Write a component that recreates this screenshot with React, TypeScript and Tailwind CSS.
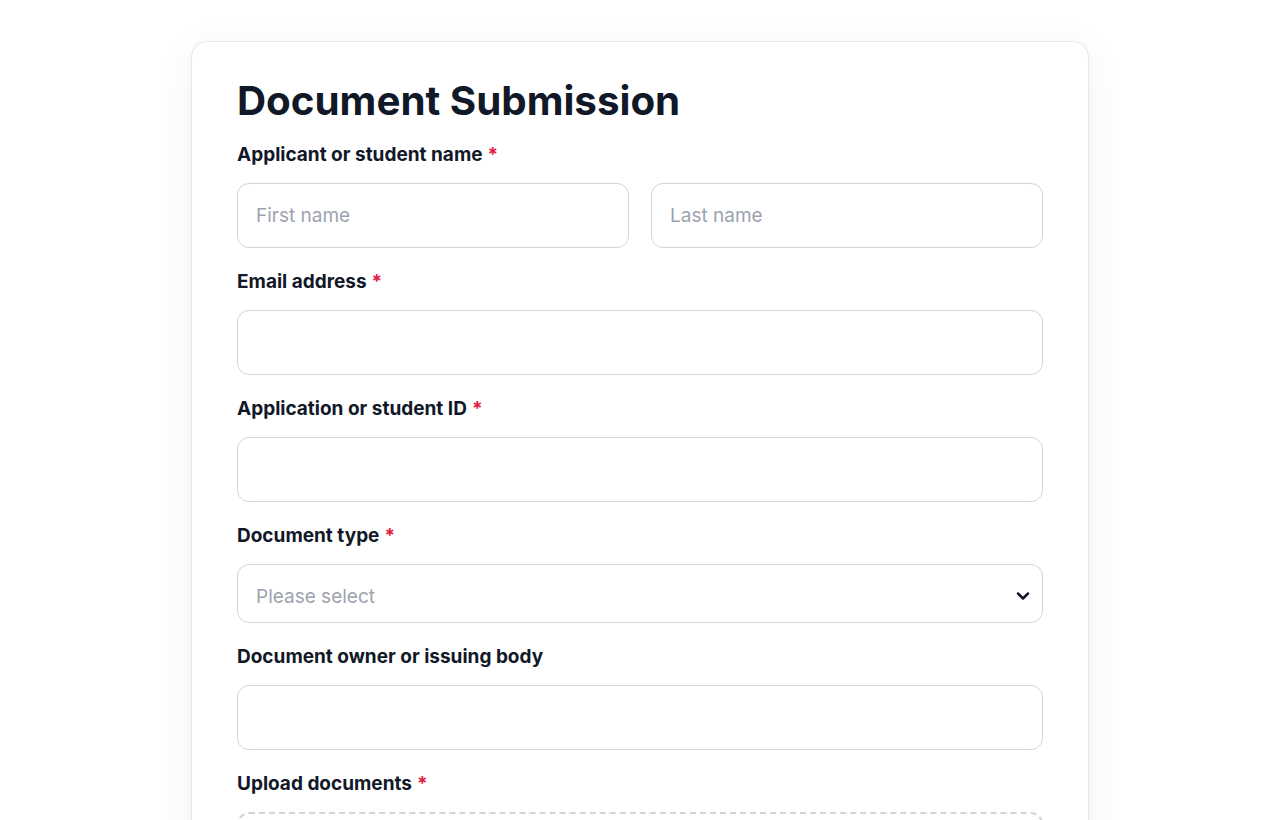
import { ChevronDown } from "lucide-react";

function Label({ text, required }: { text: string; required?: boolean }) {
  return (
    <label className="mb-[14px] block text-[19px] font-bold leading-[28px] text-[#111827]">
      {text}
      {required && <span className="ml-[5px] text-[#e11d48]">*</span>}
    </label>
  );
}

function TextInput({ placeholder }: { placeholder?: string }) {
  return (
    <input
      type="text"
      placeholder={placeholder}
      className="h-[65px] w-full rounded-[12px] border border-[#d4d4d8] bg-white px-[18px] text-[19px] text-[#111827] outline-none placeholder:text-[#9ca3af]"
    />
  );
}

export default function App() {
  return (
    <div
      className="min-h-screen bg-white pt-[41px]"
      style={{ fontFamily: "Inter, 'Noto Sans', sans-serif" }}
    >
      <div className="mx-auto w-[898px] rounded-[16px] border border-[#e5e7eb] bg-white px-[45px] pb-10 pt-[33px] shadow-[0_8px_40px_rgba(0,0,0,0.06)]">
        <h1 className="mb-[14px] text-[40.3px] font-bold leading-[52px] text-[#111827]">
          Document Submission
        </h1>
        <form className="flex flex-col gap-[20px]">
          <div>
            <Label text="Applicant or student name" required />
            <div className="grid grid-cols-2 gap-[22px]">
              <TextInput placeholder="First name" />
              <TextInput placeholder="Last name" />
            </div>
          </div>
          <div>
            <Label text="Email address" required />
            <TextInput />
          </div>
          <div>
            <Label text="Application or student ID" required />
            <TextInput />
          </div>
          <div>
            <Label text="Document type" required />
            <div className="relative">
              <select
                defaultValue=""
                className="h-[59px] w-full appearance-none rounded-[12px] border border-[#d4d4d8] bg-white px-[18px] pt-[7px] text-[19px] text-[#9ca3af] outline-none"
              >
                <option value="" disabled>
                  Please select
                </option>
                <option>Transcript</option>
                <option>Diploma</option>
                <option>Identification</option>
              </select>
              <ChevronDown
                size={20}
                strokeWidth={3}
                className="pointer-events-none absolute right-[10px] top-1/2 mt-[2px] -translate-y-1/2 text-[#111827]"
              />
            </div>
          </div>
          <div>
            <Label text="Document owner or issuing body" />
            <TextInput />
          </div>
          <div>
            <Label text="Upload documents" required />
            <div className="flex h-[180px] flex-col items-center justify-center rounded-[12px] border-2 border-dashed border-[#d1d5db] text-[16px] text-[#6b7280]">
              Drag and drop files here, or click to browse
            </div>
          </div>
        </form>
      </div>
    </div>
  );
}
